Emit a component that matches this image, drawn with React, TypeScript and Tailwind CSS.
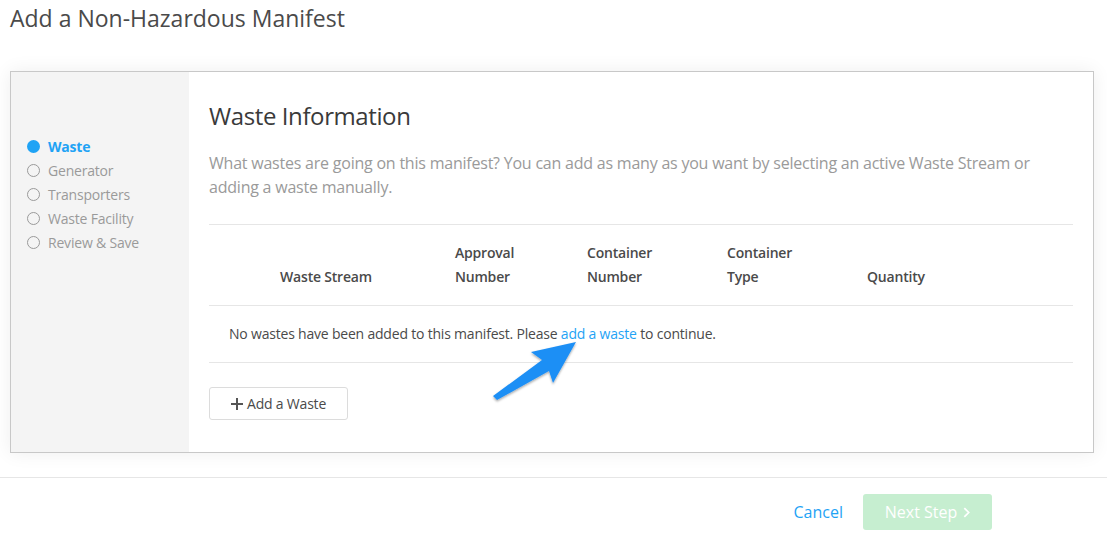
import React from 'react';

const steps = [
  { label: 'Waste', active: true },
  { label: 'Generator', active: false },
  { label: 'Transporters', active: false },
  { label: 'Waste Facility', active: false },
  { label: 'Review & Save', active: false },
];

function Arrow() {
  return (
    <svg
      className="absolute left-[488px] top-[338px] w-[95px] h-[70px]"
      viewBox="488 338 95 70"
    >
      <defs>
        <filter id="arrow-shadow" x="-20%" y="-20%" width="140%" height="140%">
          <feDropShadow dx="0" dy="1.5" stdDeviation="1.2" floodColor="#000" floodOpacity="0.35" />
        </filter>
      </defs>
      <polygon
        points="576,342 531,352 542,360 493,396 497,400 549,371 553,383"
        fill="#1f8ff5"
        filter="url(#arrow-shadow)"
      />
    </svg>
  );
}

export default function App() {
  return (
    <div className="relative min-h-[551px] bg-white font-['Open_Sans',sans-serif] text-[#4a4a4a]">
      {/* Title */}
      <h1 className="px-[10px] pt-[2px] text-[23px] leading-[32px] text-[#4a4a4a]">
        Add a Non-Hazardous Manifest
      </h1>

      {/* Wizard box */}
      <div className="mx-[10px] mt-[37px] w-[1084px] h-[382px] flex border border-[#c8c8c8] shadow-[0_0_18px_rgba(0,0,0,0.07)]">
        {/* Steps sidebar */}
        <div className="w-[178px] shrink-0 bg-[#f4f4f4] pt-[62px] pl-[16px]">
          {steps.map(s => (
            <div key={s.label} className="flex items-center h-[24px] gap-[8px]">
              <span
                className={
                  s.active
                    ? 'w-[13px] h-[13px] rounded-full bg-[#1fa3f5]'
                    : 'w-[13px] h-[13px] rounded-full border border-[#9a9a9a]'
                }
              />
              <span
                className={
                  s.active
                    ? 'text-[14px] font-bold tracking-[-0.2px] text-[#1fa3f5]'
                    : 'text-[14px] tracking-[-0.2px] text-[#9a9a9a]'
                }
              >
                {s.label}
              </span>
            </div>
          ))}
        </div>

        {/* Main */}
        <div className="flex-1 px-[20px] pt-[28px]">
          <h2 className="text-[24px] leading-[32px] tracking-[-0.4px] text-[#3a3a3a]">Waste Information</h2>
          <p className="mt-[19px] text-[16px] leading-[24px] tracking-[-0.22px] text-[#9a9a9a]">
            What wastes are going on this manifest? You can add as many as you want by selecting an active Waste Stream or adding a waste manually.
          </p>

          {/* Table */}
          <div className="mt-[25px] border-t border-[#e6e6e6]">
            <div className="grid grid-cols-[226px_132px_140px_140px_1fr] border-b border-[#e6e6e6] py-[16px] text-[14px] leading-[24px] font-semibold tracking-[-0.2px] text-[#4a4a4a]">
              <div className="flex items-end justify-center pl-[8px]">Waste Stream</div>
              <div className="px-[20px]">Approval<br />Number</div>
              <div className="px-[20px]">Container<br />Number</div>
              <div className="px-[20px]">Container<br />Type</div>
              <div className="flex items-end px-[20px]">Quantity</div>
            </div>
            <div className="border-b border-[#e6e6e6] px-[20px] py-[16px] text-[14px] leading-[24px] tracking-[-0.2px] text-[#4a4a4a]">
              No wastes have been added to this manifest. Please{' '}
              <a className="text-[#1fa3f5]">add a waste</a> to continue.
            </div>
          </div>

          <button className="mt-[24px] h-[33px] px-[21px] flex items-center gap-[4px] border border-[#dcdcdc] rounded-[3px] bg-white text-[14px] tracking-[-0.2px] text-[#4a4a4a]">
            <svg viewBox="0 0 12 12" className="w-[12px] h-[12px]">
              <path d="M5 0h2v5h5v2H7v5H5V7H0V5h5z" fill="#555" />
            </svg>
            Add a Waste
          </button>
        </div>
      </div>

      {/* Footer */}
      <div className="mt-[24px] border-t border-[#e6e6e6] flex items-center justify-end pr-[115px] pt-[16px] gap-[20px]">
        <a className="text-[16px] text-[#1fa3f5]">Cancel</a>
        <button className="h-[36px] w-[129px] flex items-center justify-center gap-[6px] rounded-[3px] bg-[#c6eed0] text-[16px] text-white">
          Next Step
          <svg viewBox="0 0 8 12" className="w-[7px] h-[11px]">
            <path d="M1.5 1l5 5-5 5" stroke="#fff" strokeWidth="2" fill="none" />
          </svg>
        </button>
      </div>

      <Arrow />
    </div>
  );
}
